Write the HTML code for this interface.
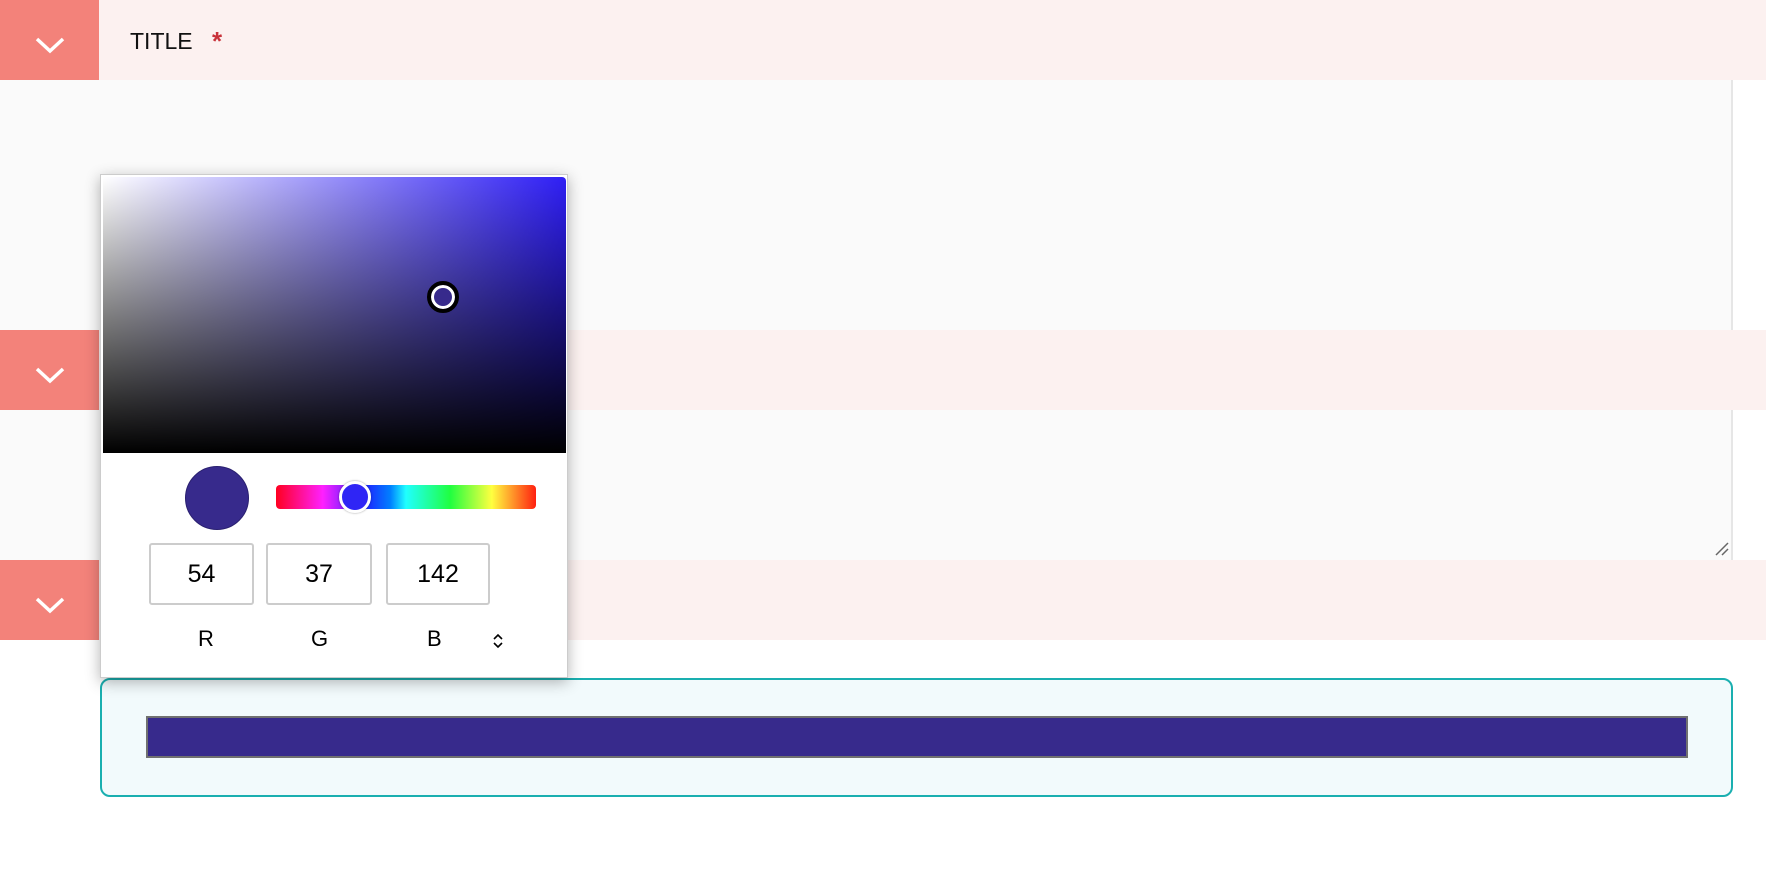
<!DOCTYPE html>
<html><head><meta charset="utf-8"><style>
*{box-sizing:border-box;margin:0;padding:0}
body{width:1766px;height:882px;background:#fff;position:relative;overflow:hidden;font-family:"Liberation Sans",Arial,sans-serif}
.abs{position:absolute}
.bar{position:absolute;left:0;width:1766px;height:80px;background:#fcf1f0}
.chev{position:absolute;left:0;top:0;width:99px;height:80px;background:#f3827a}
.chev svg{position:absolute;left:34px;top:35px}
.ta{position:absolute;left:0;width:1733px;background:#fafafa;border-right:2px solid #e6e6e6}
.inp{position:absolute;top:543px;height:62px;border:2px solid #ccc;border-radius:3px;background:#fff;font-size:25px;color:#000;text-align:center;line-height:58px}
.lbl{position:absolute;top:626px;font-size:22px;color:#000}
</style></head><body>
<div class="ta" style="top:80px;height:250px"></div>
<div class="ta" style="top:410px;height:150px"></div>
<svg class="abs" style="left:1714px;top:541px" width="16" height="16"><path d="M2 14 L14 2 M8 14 L14 8" stroke="#666" stroke-width="1.5"/></svg>

<div class="bar" style="top:0"><div class="chev"><svg width="32" height="20"><path d="M3 4 L16 16 L29 4" stroke="#fff" stroke-width="3.5" fill="none"/></svg></div>
<div class="abs" style="left:130px;top:28px;font-size:23px;color:#111">TITLE</div>
<div class="abs" style="left:212px;top:26px;font-size:26px;color:#c8323a;font-weight:bold">*</div></div>
<div class="bar" style="top:330px"><div class="chev"><svg width="32" height="20"><path d="M3 4 L16 16 L29 4" stroke="#fff" stroke-width="3.5" fill="none"/></svg></div></div>
<div class="bar" style="top:560px"><div class="chev"><svg width="32" height="20"><path d="M3 4 L16 16 L29 4" stroke="#fff" stroke-width="3.5" fill="none"/></svg></div></div>

<div class="abs" style="left:100px;top:678px;width:1633px;height:119px;border:2px solid #1aafb0;border-radius:10px;background:#f2fafc"></div>
<div class="abs" style="left:146px;top:716px;width:1542px;height:42px;background:#372a8c;border:2px solid #707070"></div>

<div class="abs" style="left:100px;top:174px;width:468px;height:504px;background:#fff;border:1px solid #ccc;box-shadow:0 4px 14px rgba(0,0,0,.3)">
 <div class="abs" style="left:2px;top:2px;width:463px;height:276px;border-radius:0 4px 0 0;background:linear-gradient(to bottom,rgba(0,0,0,0),#000),linear-gradient(to right,#fff,#2f1ff5)"></div>
 <div class="abs" style="left:326px;top:106px;width:32px;height:32px;border-radius:50%;border:4px solid #000;background:#372a8c;box-shadow:inset 0 0 0 3px #fff"></div>
 <div class="abs" style="left:84px;top:291px;width:64px;height:64px;border-radius:50%;background:#372a8c;border:1px solid #2a2070"></div>
 <div class="abs" style="left:175px;top:310px;width:260px;height:24px;border-radius:4px;background:linear-gradient(to right,#ff0020 0%,#ff20ff 18%,#2020ff 34%,#0080ff 44%,#20ffff 50%,#20ff40 67%,#ffff40 83%,#ff2010 100%)"></div>
 <div class="abs" style="left:238px;top:306px;width:32px;height:32px;border-radius:50%;background:#2f25f5;border:3px solid #fff;box-shadow:0 0 2px rgba(0,0,0,.4)"></div>
</div>
<div class="inp" style="left:149px;width:105px">54</div>
<div class="inp" style="left:266px;width:106px">37</div>
<div class="inp" style="left:386px;width:104px">142</div>
<div class="lbl" style="left:198px">R</div>
<div class="lbl" style="left:311px">G</div>
<div class="lbl" style="left:427px">B</div>
<svg class="abs" style="left:492px;top:632px" width="12" height="18"><path d="M2 7 L6 3 L10 7 M2 11 L6 15 L10 11" stroke="#000" stroke-width="1.6" fill="none"/></svg>
</body></html>
